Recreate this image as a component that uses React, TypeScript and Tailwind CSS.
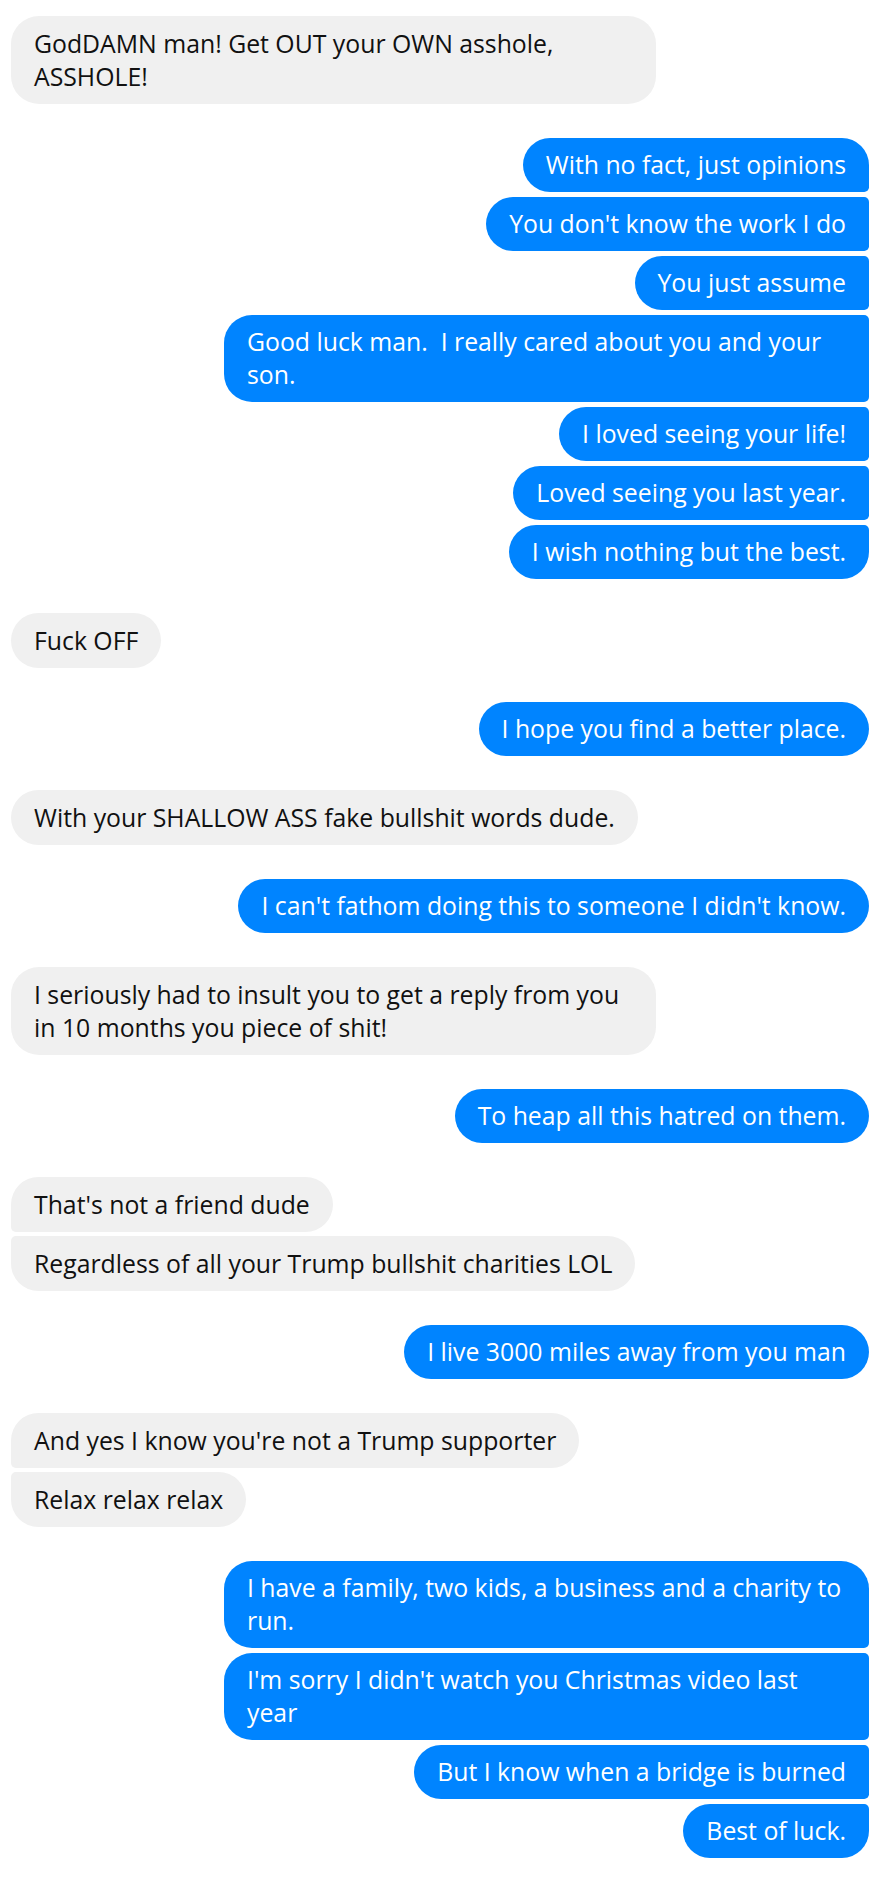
type Side = 'me' | 'them';

type Group = {
  side: Side;
  messages: string[];
};

const groups: Group[] = [
  { side: 'them', messages: ['GodDAMN man! Get OUT your OWN asshole,\nASSHOLE!'] },
  {
    side: 'me',
    messages: [
      'With no fact, just opinions',
      "You don't know the work I do",
      'You just assume',
      'Good luck man.  I really cared about you and your\nson.',
      'I loved seeing your life!',
      'Loved seeing you last year.',
      'I wish nothing but the best.',
    ],
  },
  { side: 'them', messages: ['Fuck OFF'] },
  { side: 'me', messages: ['I hope you find a better place.'] },
  { side: 'them', messages: ['With your SHALLOW ASS fake bullshit words dude.'] },
  { side: 'me', messages: ["I can't fathom doing this to someone I didn't know."] },
  {
    side: 'them',
    messages: ['I seriously had to insult you to get a reply from you\nin 10 months you piece of shit!'],
  },
  { side: 'me', messages: ['To heap all this hatred on them.'] },
  {
    side: 'them',
    messages: ["That's not a friend dude", 'Regardless of all your Trump bullshit charities LOL'],
  },
  { side: 'me', messages: ['I live 3000 miles away from you man'] },
  {
    side: 'them',
    messages: ["And yes I know you're not a Trump supporter", 'Relax relax relax'],
  },
  {
    side: 'me',
    messages: [
      'I have a family, two kids, a business and a charity to\nrun.',
      "I'm sorry I didn't watch you Christmas video last\nyear",
      'But I know when a bridge is burned',
      'Best of luck.',
    ],
  },
];

function cornerClass(side: Side, index: number, count: number) {
  if (count === 1) return 'rounded-[28px]';
  const first = index === 0;
  const last = index === count - 1;
  if (side === 'me') {
    if (first) return 'rounded-[28px] rounded-br-[5px]';
    if (last) return 'rounded-[28px] rounded-tr-[5px]';
    return 'rounded-[28px] rounded-r-[5px]';
  }
  if (first) return 'rounded-[28px] rounded-bl-[5px]';
  if (last) return 'rounded-[28px] rounded-tl-[5px]';
  return 'rounded-[28px] rounded-l-[5px]';
}

function Bubble({ text, side, corners }: { text: string; side: Side; corners: string }) {
  // explicit line breaks mean the bubble has hit its max width
  const multiline = text.includes('\n');
  const color = side === 'me' ? 'bg-[#0084ff] text-white' : 'bg-[#f0f0f0] text-[#111]';

  return (
    <div
      className={`${color} ${corners} ${multiline ? 'w-[645px]' : 'max-w-[645px]'} whitespace-pre px-[23px] py-[10.75px] text-[24.8px] leading-[33px]`}
    >
      {text}
    </div>
  );
}

export default function App() {
  return (
    <div className="min-h-[1878px] bg-white pl-[11px] pr-[16px] pt-[16px] font-['Open_Sans',sans-serif]">
      <div className="flex flex-col gap-[34px]">
        {groups.map((group, gi) => (
          <div
            key={gi}
            className={`flex flex-col gap-[4.5px] ${group.side === 'me' ? 'items-end' : 'items-start'}`}
          >
            {group.messages.map((msg, mi) => (
              <Bubble
                key={mi}
                text={msg}
                side={group.side}
                corners={cornerClass(group.side, mi, group.messages.length)}
              />
            ))}
          </div>
        ))}
      </div>
    </div>
  );
}
